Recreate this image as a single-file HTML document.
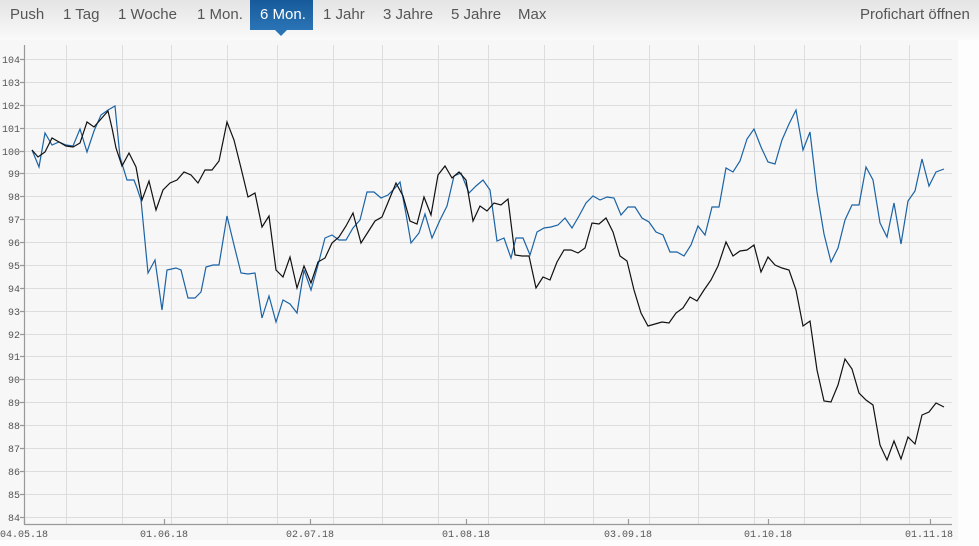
<!DOCTYPE html>
<html><head><meta charset="utf-8"><style>
html,body{margin:0;padding:0;width:979px;height:546px;overflow:hidden;background:#fdfdfd;font-family:"Liberation Sans",sans-serif}
.bar{position:absolute;left:0;top:0;width:979px;height:40px;background:linear-gradient(#e4e4e4,#f1f1f1 60%,#fafafa)}
.t{position:absolute;top:5px;font-size:15px;color:#555;line-height:20px}
.act{position:absolute;left:250px;top:0;width:63px;height:30px;background:linear-gradient(#175a9a,#2a74b6)}
.act span{position:absolute;left:10px;top:5px;color:#fff;font-size:15px;line-height:20px}
.tri{position:absolute;left:275px;top:30px;width:0;height:0;border-left:6px solid transparent;border-right:6px solid transparent;border-top:6px solid #2a74b6}
svg{position:absolute;left:0;top:0}
</style></head><body>
<div class="bar"></div>
<div class="t" style="left:10px">Push</div>
<div class="t" style="left:63px">1 Tag</div>
<div class="t" style="left:118px">1 Woche</div>
<div class="t" style="left:197px">1 Mon.</div>
<div class="act"><span>6 Mon.</span></div>
<div class="tri"></div>
<div class="t" style="left:323px">1 Jahr</div>
<div class="t" style="left:383px">3 Jahre</div>
<div class="t" style="left:451px">5 Jahre</div>
<div class="t" style="left:518px">Max</div>
<div class="t" style="left:860px">Profichart öffnen</div>
<svg width="979" height="546" style="top:0">
<rect x="0" y="40" width="958" height="500" fill="#f7f7f7"/>
<g stroke="#dddddd" stroke-width="1">
<path d="M25 59.5H952M25 82.5H952M25 105.5H952M25 128.5H952M25 151.5H952M25 173.5H952M25 196.5H952M25 219.5H952M25 242.5H952M25 265.5H952M25 288.5H952M25 311.5H952M25 334.5H952M25 356.5H952M25 379.5H952M25 402.5H952M25 425.5H952M25 448.5H952M25 471.5H952M25 494.5H952M25 517.5H952"/>
<path d="M66.5 45V524M122.5 45V524M171.5 45V524M227.5 45V524M277.5 45V524M333.5 45V524M382.5 45V524M438.5 45V524M488.5 45V524M544.5 45V524M593.5 45V524M649.5 45V524M698.5 45V524M754.5 45V524M804.5 45V524M860.5 45V524M909.5 45V524"/>
</g>
<g stroke="#999" stroke-width="1.2" fill="none">
<path d="M24.5 45V524.5H952"/>
<path d="M20 59.5h4M20 82.5h4M20 105.5h4M20 128.5h4M20 151.5h4M20 173.5h4M20 196.5h4M20 219.5h4M20 242.5h4M20 265.5h4M20 288.5h4M20 311.5h4M20 334.5h4M20 356.5h4M20 379.5h4M20 402.5h4M20 425.5h4M20 448.5h4M20 471.5h4M20 494.5h4M20 517.5h4"/>
<path d="M164.5 519v5M310.5 519v5M466.5 519v5M628.5 519v5M768.5 519v5M930.5 519v5M24.5 519v5"/>
</g>
<g font-family="Liberation Mono, monospace" font-size="10" fill="#555" text-anchor="end">
<text x="20" y="63">104</text><text x="20" y="86">103</text><text x="20" y="109">102</text><text x="20" y="132">101</text><text x="20" y="155">100</text><text x="20" y="177">99</text><text x="20" y="200">98</text><text x="20" y="223">97</text><text x="20" y="246">96</text><text x="20" y="269">95</text><text x="20" y="292">94</text><text x="20" y="315">93</text><text x="20" y="338">92</text><text x="20" y="360">91</text><text x="20" y="383">90</text><text x="20" y="406">89</text><text x="20" y="429">88</text><text x="20" y="452">87</text><text x="20" y="475">86</text><text x="20" y="498">85</text><text x="20" y="521">84</text>
</g>
<g font-family="Liberation Mono, monospace" font-size="10" fill="#555" text-anchor="middle">
<text x="24" y="537">04.05.18</text><text x="164" y="537">01.06.18</text><text x="310" y="537">02.07.18</text><text x="466" y="537">01.08.18</text><text x="628" y="537">03.09.18</text><text x="768" y="537">01.10.18</text><text x="929" y="537">01.11.18</text>
</g>
<polyline fill="none" stroke="#1b63a5" stroke-width="1.2" points="32,150 39,167 45,133 52,145 59,142 66,145 73,146 80,129 87,152 94,131 101,115 108,110 115,106 120,157 127,180 134,180 137,188 141,200 148,273 155,260 162,310 167,270 176,268 181,270 188,298 195,298 201,292 206,267 213,265 219,265 227,216 234,245 241,273 248,274 255,273 262,318 269,296 276,322 283,300 290,304 297,313 304,270 311,290 318,265 325,238 332,235 339,240 346,240 353,228 360,220 367,192 374,192 381,198 388,195 395,188 400,182 406,214 411,243 419,233 425,214 432,238 440,220 447,206 454,176 461,173 469,193 476,186 483,180 490,190 497,241 504,238 511,258 516,238 523,238 530,255 537,232 544,228 551,227 558,225 565,218 572,228 579,216 586,203 593,196 600,200 607,197 614,198 621,215 628,207 635,207 642,218 649,222 656,232 663,235 670,252 677,252 684,256 691,245 698,226 705,235 712,207 719,207 726,168 733,172 740,161 747,139 754,129 761,147 768,162 775,164 782,140 789,124 796,110 803,150 810,132 817,192 824,234 831,262 838,248 845,220 852,205 859,205 866,167 873,180 880,223 887,237 894,203 901,244 908,201 915,191 922,159 929,186 936,172 944,169"/>
<polyline fill="none" stroke="#111" stroke-width="1.2" points="32,150 38,157 45,152 52,138 59,142 66,146 73,147 80,143 87,122 94,127 101,119 108,111 112,128 116,148 122,166 129,153 136,167 142,200 149,181 156,210 163,190 170,183 177,180 184,172 191,175 198,183 205,170 212,170 219,161 227,122 234,140 241,168 248,197 255,193 262,227 269,216 276,270 283,277 290,257 297,288 304,266 311,283 318,262 325,258 332,243 339,237 346,226 353,213 361,243 368,232 375,221 382,217 389,200 396,183 403,196 410,221 417,224 424,197 431,215 438,175 445,166 452,178 459,172 466,180 473,221 480,206 487,211 494,203 501,205 508,199 515,255 522,256 529,256 536,288 543,277 550,280 557,262 564,250 571,250 578,253 585,248 592,223 599,224 606,218 613,232 620,256 627,261 634,290 641,313 648,326 655,324 662,322 669,323 676,313 683,308 690,297 697,301 704,290 711,280 718,266 726,242 733,256 740,251 747,250 754,245 761,272 768,257 775,265 782,268 789,270 796,290 803,326 810,321 817,370 824,401 831,402 838,385 845,359 852,369 859,393 866,400 873,405 880,445 887,460 894,441 901,459 908,437 915,444 922,415 929,412 936,403 944,407"/>
</svg>
</body></html>
